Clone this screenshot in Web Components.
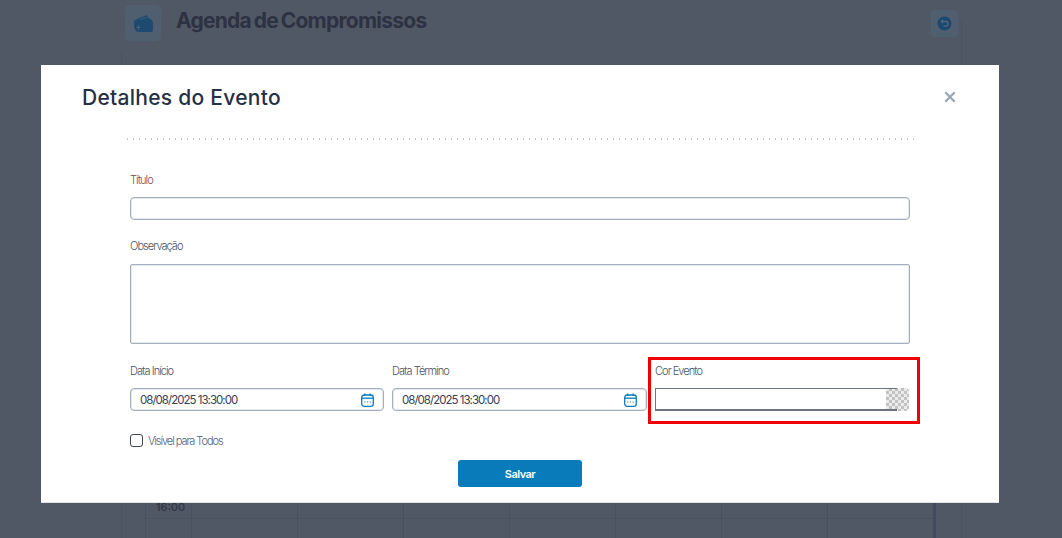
<!DOCTYPE html>
<html lang="pt-BR">
<head>
<meta charset="utf-8">
<title>Detalhes do Evento</title>
<style>
  html, body { margin: 0; height: 100%; overflow: hidden; background: #515865; }
  body { font-family: Inter, "Liberation Sans", sans-serif; }
</style>
</head>
<body>
<agenda-page></agenda-page>
<event-modal heading="Detalhes do Evento">
  <form-field label="Título" tone="required"><text-box></text-box></form-field>
  <form-field label="Observação"><text-box rows="1"></text-box></form-field>
  <div slot="row">
    <form-field label="Data Início"><date-box value="08/08/2025 13:30:00"></date-box></form-field>
    <form-field label="Data Término"><date-box value="08/08/2025 13:30:00"></date-box></form-field>
    <form-field label="Cor Evento" marked><color-box></color-box></form-field>
  </div>
  <check-line slot="check" label="Visível para Todos"></check-line>
  <save-button slot="action">Salvar</save-button>
</event-modal>

<script>
class AgendaPage extends HTMLElement {
  constructor() {
    super();
    const shadow = this.attachShadow({ mode: 'open' });
    const days = '<div class="col day"><i></i></div>'.repeat(7);
    shadow.innerHTML = `
      <style>
        :host {
          display: flex;
          flex-direction: column;
          height: 538px;
          margin-left: 121px;
          width: 841px;
          box-sizing: border-box;
          color: #2c3242;
        }
        header {
          display: flex;
          align-items: flex-start;
          height: 45px;
          padding: 5px 4px 0 4px;
          box-sizing: border-box;
          background: linear-gradient(#4b5260, #4b5260) right 19px / 1px 100% no-repeat;
        }
        .logo {
          width: 36px;
          height: 36px;
          border-radius: 5px;
          background: #505f70;
          display: flex;
          align-items: center;
          justify-content: center;
        }
        h1 {
          margin: 2px 0 0 15px;
          font-size: 21px;
          line-height: 28px;
          font-weight: 700;
          letter-spacing: -0.75px;
          word-spacing: -1.5px;
          flex: 1;
        }
        .back {
          width: 27px;
          height: 27px;
          margin: 5px 0 0 0;
          border-radius: 4px;
          background: #505f70;
          display: flex;
          align-items: center;
          justify-content: center;
        }
        .gap {
          height: 55px;
          background:
            linear-gradient(#4b5260, #4b5260) left 7px / 1px 100% no-repeat,
            linear-gradient(#4b5260, #4b5260) right top / 1px 100% no-repeat;
        }
        .grid {
          flex: 1;
          display: grid;
          grid-template-columns: 23px 46px repeat(7, 106px) 28px;
          border-left: 1px solid #4b5260;
          border-right: 1px solid #4b5260;
        }
        .col {
          display: flex;
          flex-direction: column;
          justify-content: flex-end;
          border-left: 1px solid #4a505d;
        }
        .col:first-child { border-left: 0; }
        .col i {
          display: block;
          height: 19px;
          border-top: 1px dotted #474d5a;
        }
        .time {
          font-size: 11px;
          font-weight: 500;
          line-height: 14px;
          padding: 0 0 4px 10px;
          color: #2f3543;
        }
        .tail { border-left: 3px solid #414a5e; }
      </style>
      <header>
        <div class="logo">
          <svg width="19" height="17" viewBox="0 0 19 17">
            <path fill="#1f4a70" d="M0 7 C0 5 2 4 4 4 L5 3 L13 0 L15 3.500 L17 4.500 C18.500 5 19 6.500 19 8 V15 C19 16.500 18 17 17 17 H5 C2 17 0 14 0 11Z"/>
            <path fill="none" stroke="#47617c" stroke-width="0.800" d="M6 4.500 L13.500 2"/>
            <path fill="#505f70" d="M2.500 12 h1.500 v-1.500 h1 v1.500 h1.500 v1 h-1.500 v1.500 h-1 v-1.500 h-1.500z"/>
          </svg>
        </div>
        <h1>Agenda de Compromissos</h1>
        <div class="back">
          <svg width="15" height="15" viewBox="0 0 15 15">
            <circle cx="7.500" cy="7.500" r="7" fill="#1c4870"/>
            <path fill="none" stroke="#51667c" stroke-width="1.300" d="M4.500 5.500 H9 C10.500 5.500 11 6.800 11 7.700 C11 9 10 10.200 8.500 10.200 H6.500 M6 3.800 L4.200 5.500 L6 7.200"/>
          </svg>
        </div>
      </header>
      <div class="gap"></div>
      <div class="grid">
        <div class="col"></div>
        <div class="col"><span class="time">16:00</span><i></i></div>
        ${days}
        <div class="col tail"></div>
      </div>
    `;
  }
}
customElements.define('agenda-page', AgendaPage);

class EventModal extends HTMLElement {
  constructor() {
    super();
    const shadow = this.attachShadow({ mode: 'open' });
    shadow.innerHTML = `
      <style>
        :host {
          position: fixed;
          left: 41px;
          top: 65px;
          width: 958px;
          height: 438px;
          display: flex;
          flex-direction: column;
          box-sizing: border-box;
          background: #fff;
          border-bottom: 1px solid #dfe1e5;
        }
        header {
          display: flex;
          align-items: center;
          justify-content: space-between;
          height: 64px;
          padding: 0 43px 0 41px;
        }
        h2 {
          margin: 0;
          font-size: 21px;
          font-weight: 500;
          letter-spacing: 0.27px;
          color: #252f45;
        }
        .close { width: 12px; height: 12px; display: block; margin-top: -1px; }
        .sep {
          margin: 9px 85px 0 86px;
          height: 2px;
          background: linear-gradient(to right, #c4c6ca 1px, transparent 1px) left top / 6px 2px repeat-x;
        }
        .form {
          display: flex;
          flex-direction: column;
          padding: 33px 89px 0 89px;
        }
        ::slotted(form-field) { margin-bottom: 19px; }
        ::slotted([slot="row"]) {
          display: grid;
          grid-template-columns: 254px 255px 255px;
          gap: 8px;
        }
        ::slotted(check-line) { margin-top: 23px; }
        .action {
          display: flex;
          justify-content: center;
          margin-top: 13px;
        }
      </style>
      <header>
        <h2>${this.getAttribute('heading')}</h2>
        <svg class="close" viewBox="0 0 12 12" aria-label="Fechar">
          <path d="M1.300 1.300 L10.700 10.700 M10.700 1.300 L1.300 10.700" stroke="#9aa5b4" stroke-width="2.200" fill="none"/>
        </svg>
      </header>
      <div class="sep"></div>
      <div class="form">
        <slot></slot>
        <slot name="row"></slot>
        <slot name="check"></slot>
        <div class="action"><slot name="action"></slot></div>
      </div>
    `;
  }
}
customElements.define('event-modal', EventModal);

class FormField extends HTMLElement {
  constructor() {
    super();
    const shadow = this.attachShadow({ mode: 'open' });
    const required = this.getAttribute('tone') === 'required';
    const marked = this.hasAttribute('marked');
    shadow.innerHTML = `
      <style>
        :host { display: flex; flex-direction: column; position: relative; }
        label {
          display: block;
          font-size: 11px;
          font-weight: 300;
          line-height: 14px;
          letter-spacing: -0.95px;
          color: ${required ? '#7a4a52' : '#4a5364'};
          margin-bottom: 10px;
        }
        .mark {
          position: absolute;
          left: -7px;
          top: -7px;
          right: -10px;
          bottom: -13px;
          border: 3px solid #f00000;
          pointer-events: none;
        }
      </style>
      <label>${this.getAttribute('label')}</label>
      <slot></slot>
      ${marked ? '<div class="mark"></div>' : ''}
    `;
  }
}
customElements.define('form-field', FormField);

class TextBox extends HTMLElement {
  constructor() {
    super();
    const shadow = this.attachShadow({ mode: 'open' });
    const tall = this.hasAttribute('rows');
    shadow.innerHTML = `
      <style>
        :host {
          display: block;
          height: ${tall ? 80 : 23}px;
          margin: ${tall ? '1px 0' : '0'};
          box-sizing: border-box;
          border: 1px solid #a3b0be;
          box-shadow: inset 0 0 0 1px #e4e8ed;
          border-radius: ${tall ? 2 : 4}px;
          background: #fff;
        }
      </style>
    `;
  }
}
customElements.define('text-box', TextBox);

class DateBox extends HTMLElement {
  constructor() {
    super();
    const shadow = this.attachShadow({ mode: 'open' });
    shadow.innerHTML = `
      <style>
        :host {
          display: flex;
          align-items: center;
          justify-content: space-between;
          height: 23px;
          box-sizing: border-box;
          padding: 0 9px 0 9px;
          border: 1px solid #a3b0be;
          box-shadow: inset 0 0 0 1px #e4e8ed;
          border-radius: 4px;
          background: #fff;
          font-size: 11.500px;
          letter-spacing: -0.98px;
          color: #364053;
        }
        svg { display: block; }
      </style>
      <span>${this.getAttribute('value')}</span>
      <svg width="13" height="14" viewBox="0 0 13 14" fill="none">
        <rect x="0.700" y="2" width="11.600" height="11.300" rx="2.500" stroke="#0a7bba" stroke-width="1.300"/>
        <path d="M1 5.200 H12" stroke="#0a7bba" stroke-width="1.300"/>
        <path d="M3.800 0.500 V3 M9.200 0.500 V3" stroke="#0a7bba" stroke-width="1.200"/>
        <path d="M3.200 9 h1.200 M5.900 9 h1.200 M8.600 9 h1.200" stroke="#5b6b80" stroke-width="1.200"/>
      </svg>
    `;
  }
}
customElements.define('date-box', DateBox);

class ColorBox extends HTMLElement {
  constructor() {
    super();
    const shadow = this.attachShadow({ mode: 'open' });
    shadow.innerHTML = `
      <style>
        :host {
          display: block;
          position: relative;
          height: 23px;
        }
        .field {
          position: relative;
          z-index: 1;
          width: 242px;
          height: 23px;
          box-sizing: border-box;
          border: 1px solid #6d7480;
          border-right: 0;
          border-bottom-width: 2px;
        }
        .swatch {
          position: absolute;
          right: 1px;
          top: 0;
          width: 23px;
          height: 23px;
          border-radius: 0 4px 4px 0;
          background-color: #fff;
          background-image: conic-gradient(#c2c2c2 25%, #ececec 0 50%, #c2c2c2 0 75%, #ececec 0);
          background-size: 6px 6px;
        }
      </style>
      <div class="field"></div>
      <div class="swatch"></div>
    `;
  }
}
customElements.define('color-box', ColorBox);

class CheckLine extends HTMLElement {
  constructor() {
    super();
    const shadow = this.attachShadow({ mode: 'open' });
    shadow.innerHTML = `
      <style>
        :host {
          display: flex;
          align-items: center;
          gap: 5px;
          height: 13px;
          font-size: 11px;
          font-weight: 300;
          letter-spacing: -1.05px;
          color: #56607a;
        }
        .box {
          width: 13px;
          height: 13px;
          box-sizing: border-box;
          border: 1px solid #3f4654;
          border-radius: 3px;
        }
      </style>
      <div class="box"></div>
      <span>${this.getAttribute('label')}</span>
    `;
  }
}
customElements.define('check-line', CheckLine);

class SaveButton extends HTMLElement {
  constructor() {
    super();
    const shadow = this.attachShadow({ mode: 'open' });
    shadow.innerHTML = `
      <style>
        :host {
          display: flex;
          align-items: center;
          justify-content: center;
          width: 124px;
          height: 27px;
          border-radius: 3px;
          background: #0a7bba;
          color: #fff;
          font-size: 11px;
          font-weight: 600;
          letter-spacing: -0.5px;
        }
      </style>
      <slot></slot>
    `;
  }
}
customElements.define('save-button', SaveButton);
</script>
</body>
</html>
